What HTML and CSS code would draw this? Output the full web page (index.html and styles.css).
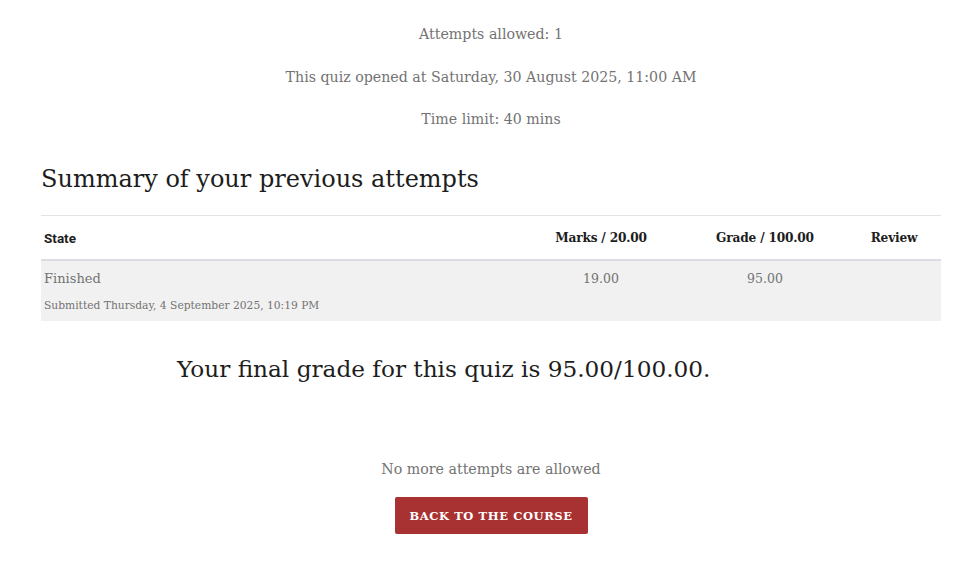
FILE: index.html
```html
<!DOCTYPE html>
<html lang="en">
<head>
<meta charset="utf-8">
<title>Quiz summary</title>
<link rel="stylesheet" href="styles.css">
</head>
<body>
<main class="page">
  <section class="quizinfo">
    <p>Attempts allowed: 1</p>
    <p>This quiz opened at Saturday, 30 August 2025, 11:00 AM</p>
    <p>Time limit: 40 mins</p>
  </section>

  <h3 class="summary-title">Summary of your previous attempts</h3>

  <table class="attempts">
    <thead>
      <tr>
        <th class="col-state">State</th>
        <th class="col-marks">Marks / 20.00</th>
        <th class="col-grade">Grade / 100.00</th>
        <th class="col-review">Review</th>
      </tr>
    </thead>
    <tbody>
      <tr>
        <td class="col-state">
          <div class="state">Finished</div>
          <div class="submitted">Submitted Thursday, 4 September 2025, 10:19 PM</div>
        </td>
        <td class="col-marks">19.00</td>
        <td class="col-grade">95.00</td>
        <td class="col-review"></td>
      </tr>
    </tbody>
  </table>

  <h3 class="final-grade">Your final grade for this quiz is 95.00/100.00.</h3>

  <div class="continue">
    <p>No more attempts are allowed</p>
    <button class="btn-back" type="button">Back to the course</button>
  </div>
</main>
</body>
</html>
```

FILE: styles.css
```css
html, body {
  margin: 0;
  padding: 0;
  background: #ffffff;
}

body {
  font-family: "DejaVu Serif", "Liberation Serif", serif;
  color: #737373;
}

.page {
  padding: 23px 16px 0 41px;
}

.quizinfo {
  display: flex;
  flex-direction: column;
  align-items: center;
  gap: 20.5px;
}

.quizinfo p {
  margin: 0;
  font-size: 14.2px;
  line-height: 22px;
}

.summary-title {
  margin: 34px 0 20px;
  font-size: 24px;
  line-height: 31px;
  font-weight: 400;
  color: #1d1d1d;
}

.attempts {
  width: 900px;
  border-collapse: collapse;
  border-top: 1px solid #e3e3e3;
  table-layout: fixed;
}

.attempts th,
.attempts td {
  box-sizing: border-box;
}

.attempts th {
  padding: 12px 3px 11px;
  line-height: 20px;
  font-size: 12.2px;
  letter-spacing: -0.2px;
  font-weight: 700;
  color: #1d1d1d;
  border-bottom: 2px solid #dcdde2;
  text-align: center;
}

.attempts th.col-state {
  font-family: Roboto, "Liberation Sans", sans-serif;
  font-size: 13.5px;
  letter-spacing: 0;
  text-align: left;
}

.attempts tbody tr {
  background: #f1f1f1;
}

.attempts td {
  padding: 8px 3px 6px;
  vertical-align: top;
  text-align: center;
  font-size: 12.5px;
  line-height: 20px;
  color: #737373;
}

.attempts td.col-state {
  text-align: left;
}

.col-state { width: 478px; }
.col-marks { width: 164px; }
.col-grade { width: 164px; }
.col-review { width: 94px; }

.state {
  font-size: 13px;
  line-height: 20px;
}

.submitted {
  margin-top: 8px;
  font-size: 10.7px;
  line-height: 18px;
}

.final-grade {
  margin: 33px 0 0 136px;
  font-size: 23.2px;
  line-height: 30px;
  font-weight: 400;
  color: #1d1d1d;
}

.continue {
  margin-top: 74px;
  display: flex;
  flex-direction: column;
  align-items: center;
  gap: 17px;
}

.continue p {
  margin: 0;
  font-size: 14.2px;
  line-height: 22px;
}

.btn-back {
  width: 193px;
  height: 37px;
  border: none;
  border-radius: 2px;
  background: #a83232;
  color: #ffffff;
  font-family: "DejaVu Serif", serif;
  font-weight: 700;
  font-size: 11.5px;
  letter-spacing: 0.6px;
  text-transform: uppercase;
  padding: 0;
}
```
